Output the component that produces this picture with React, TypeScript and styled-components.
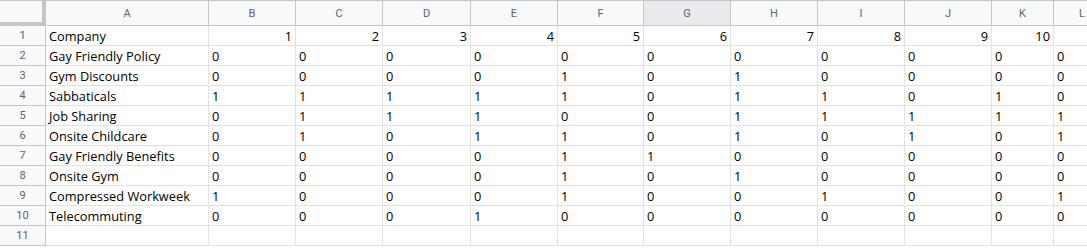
import React from "react";
import styled, { createGlobalStyle } from "styled-components";

const columns = ["A", "B", "C", "D", "E", "F", "G", "H", "I", "J", "K", "L"];
const widths = [163, 87, 87, 88, 87, 86, 87, 87, 87, 87, 62, 57];
const selectedColumn = "G";

const rows: { label: string; values: number[] }[] = [
  { label: "Gay Friendly Policy", values: [0, 0, 0, 0, 0, 0, 0, 0, 0, 0, 0] },
  { label: "Gym Discounts", values: [0, 0, 0, 0, 1, 0, 1, 0, 0, 0, 0] },
  { label: "Sabbaticals", values: [1, 1, 1, 1, 1, 0, 1, 1, 0, 1, 0] },
  { label: "Job Sharing", values: [0, 1, 1, 1, 0, 0, 1, 1, 1, 1, 1] },
  { label: "Onsite Childcare", values: [0, 1, 0, 1, 1, 0, 1, 0, 1, 0, 1] },
  { label: "Gay Friendly Benefits", values: [0, 0, 0, 0, 1, 1, 0, 0, 0, 0, 0] },
  { label: "Onsite Gym", values: [0, 0, 0, 0, 1, 0, 1, 0, 0, 0, 0] },
  { label: "Compressed Workweek", values: [1, 0, 0, 0, 1, 0, 0, 1, 0, 0, 1] },
  { label: "Telecommuting", values: [0, 0, 0, 1, 0, 0, 0, 0, 0, 0, 0] },
];

const GlobalStyle = createGlobalStyle`
  html, body {
    margin: 0;
    background: #ffffff;
    overflow: hidden;
  }
`;

const App: React.FC = () => {
  return (
    <>
      <GlobalStyle />
      <Viewport>
        <Sheet $template={`46px ${widths.map((w) => `${w}px`).join(" ")}`}>
          <Corner />
          {columns.map((col) => (
            <ColHeader key={col} $selected={col === selectedColumn}>{col}</ColHeader>
          ))}

          <RowHeader>1</RowHeader>
          <Cell>Company</Cell>
          {Array.from({ length: 10 }, (_, i) => (
            <Cell key={i} $align="right">{i + 1}</Cell>
          ))}
          <Cell />

          {rows.map((row, r) => (
            <React.Fragment key={row.label}>
              <RowHeader>{r + 2}</RowHeader>
              <Cell>{row.label}</Cell>
              {row.values.map((v, i) => (
                <Cell key={i}>{v}</Cell>
              ))}
            </React.Fragment>
          ))}

          <RowHeader>11</RowHeader>
          {columns.map((col) => (
            <Cell key={col} />
          ))}
        </Sheet>
      </Viewport>
    </>
  );
};

export default App;

const Viewport = styled.div`
  width: 100vw;
  overflow: hidden;
`;

const Sheet = styled.div<{ $template: string }>`
  display: grid;
  grid-template-columns: ${({ $template }) => $template};
  grid-auto-rows: 20px;
  grid-template-rows: 25px;
  width: max-content;
  border-top: 1px solid #c4c7c5;
  font-family: "Open Sans", "Noto Sans", sans-serif;
`;

const Corner = styled.div`
  box-sizing: border-box;
  background: #f8f9fa;
  border-right: 4px solid #c4c7c5;
  border-bottom: 4px solid #c4c7c5;
`;

const ColHeader = styled.div<{ $selected?: boolean }>`
  box-sizing: border-box;
  display: flex;
  align-items: center;
  justify-content: center;
  background: ${({ $selected }) => ($selected ? "#e8eaed" : "#f8f9fa")};
  border-right: 1px solid #c4c7c5;
  border-bottom: 1px solid #c4c7c5;
  color: #5f6368;
  font-family: Roboto, "Liberation Sans", sans-serif;
  font-size: 11px;
`;

const RowHeader = styled.div`
  box-sizing: border-box;
  display: flex;
  align-items: center;
  justify-content: center;
  background: #f8f9fa;
  border-right: 1px solid #c4c7c5;
  border-bottom: 1px solid #c4c7c5;
  color: #5f6368;
  font-family: Roboto, "Liberation Sans", sans-serif;
  font-size: 11px;
`;

const Cell = styled.div<{ $align?: "left" | "right" }>`
  box-sizing: border-box;
  display: flex;
  align-items: center;
  justify-content: ${({ $align }) => ($align === "right" ? "flex-end" : "flex-start")};
  padding: 0 3px;
  border-right: 1px solid #e2e2e3;
  border-bottom: 1px solid #e2e2e3;
  color: #000000;
  font-size: 12.8px;
  white-space: nowrap;
  overflow: hidden;
`;
